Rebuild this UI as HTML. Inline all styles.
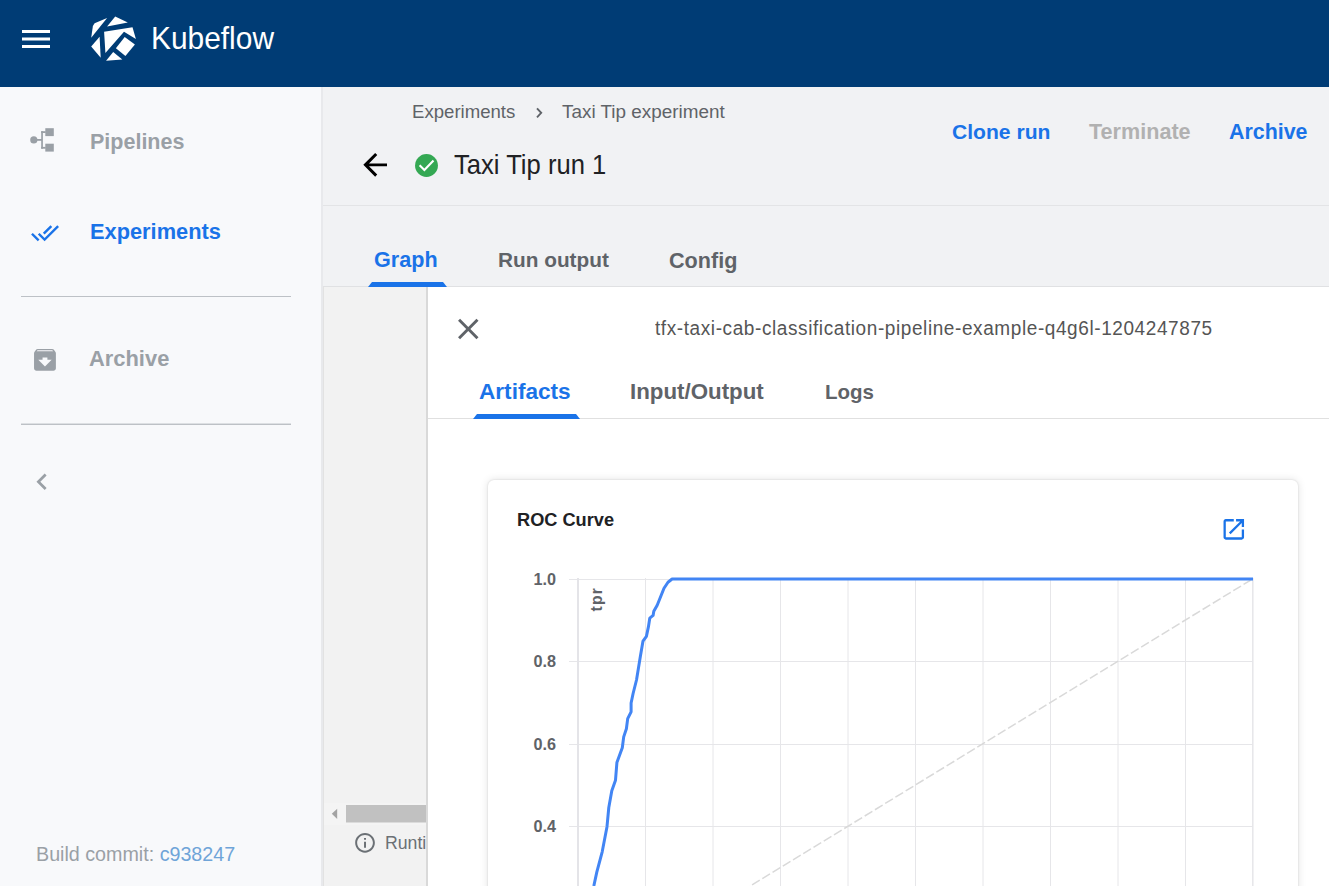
<!DOCTYPE html>
<html>
<head>
<meta charset="utf-8">
<style>
html,body{margin:0;padding:0;}
body{width:1329px;height:886px;overflow:hidden;position:relative;background:#fff;font-family:"Liberation Sans",sans-serif;}
.abs{position:absolute;}
.t{position:absolute;white-space:nowrap;}
.b{font-weight:bold;}
#header{left:0;top:0;width:1329px;height:87px;background:#003c75;}
#sidebar{left:0;top:87px;width:321px;height:799px;background:#f8f9fb;}
#sideborder{left:321px;top:87px;width:2px;height:799px;background:#e8e9ec;}
#content{left:323px;top:87px;width:1006px;height:799px;background:#f1f2f4;}
.divider{position:absolute;left:21px;width:270px;height:1px;background:#bdc1c6;}
</style>
</head>
<body>
<!-- HEADER -->
<div id="header" class="abs">
  <svg class="abs" style="left:0;top:0" width="300" height="87" viewBox="0 0 300 87">
    <rect x="22" y="30" width="28" height="3" fill="#fff"/>
    <rect x="22" y="37.5" width="28" height="3" fill="#fff"/>
    <rect x="22" y="45" width="28" height="3" fill="#fff"/>
    <g fill="#fff">
      <polygon points="94.6,23.2 107.1,18.1 91.2,37.8 92.9,25.9"/>
      <polygon points="115.2,16.4 127.8,22.5 107.1,26.6"/>
      <polygon points="99.6,36.7 91.2,46.6 100.7,57.7"/>
      <polygon points="104.1,31.7 132.5,27.3 135.9,39.1 124,31.7 105.4,53"/>
      <polygon points="124.7,37.1 134.9,44.5 125.4,56 115.9,48.3"/>
      <polygon points="113.2,52 122.3,59.4 106.1,60.8"/>
    </g>
  </svg>
  <div class="t" style="left:151px;top:24px;font-size:29.9px;line-height:29.9px;color:#fff;transform:scaleY(1.07);transform-origin:0 25px;">Kubeflow</div>
</div>

<!-- SIDEBAR -->
<div id="sidebar" class="abs">
</div>
<div id="sideborder" class="abs"></div>
<svg class="abs" style="left:0;top:87px" width="321" height="799" viewBox="0 87 321 799">
  <g fill="#9aa0a6">
    <circle cx="33.8" cy="139.9" r="3.6"/>
    <rect x="36" y="139" width="6" height="1.8"/>
    <rect x="41.2" y="131.2" width="1.7" height="17.5"/>
    <rect x="41.2" y="131.2" width="4.5" height="1.8"/>
    <rect x="41.2" y="146.9" width="4.5" height="1.8"/>
    <rect x="45.3" y="128.2" width="8.5" height="7.9"/>
    <rect x="45.3" y="143.7" width="8.5" height="7.9"/>
  </g>
  <path transform="translate(30.6,218.5) scale(1.2)" fill="#1a73e8" d="M18 7l-1.41-1.41-6.34 6.34 1.41 1.41L18 7zm4.24-1.41L11.66 16.17 7.48 12l-1.41 1.41L11.66 19l12-12-1.42-1.41zM.41 13.41L6 19l1.41-1.41L1.83 12 .41 13.41z"/>
  <path transform="translate(30.4,345.3) scale(1.214)" fill="#9aa0a6" d="M20.54 5.23l-1.39-1.68C18.88 3.21 18.47 3 18 3H6c-.47 0-.88.21-1.16.55L3.46 5.23C3.170 5.57 3 6.02 3 6.5V19c0 1.1.9 2 2 2h14c1.1 0 2-.9 2-2V6.5c0-.48-.17-.93-.46-1.27zM12 17.5L6.5 12H10v-2h4v2h3.5L12 17.5zM5.12 5l.81-1h12l.94 1H5.12z"/>
  <path transform="translate(25.5,465.3) scale(1.37)" fill="#9aa0a6" d="M15.41 7.41L14 6l-6 6 6 6 1.41-1.41L10.83 12z"/>
</svg>
<div class="divider" style="top:296px"></div>
<div class="divider" style="top:424px;box-shadow:0 -1px 0 rgba(189,193,198,0.45)"></div>
<div class="t b" style="left:90px;top:132px;font-size:21.5px;line-height:21.5px;color:#9aa0a6;">Pipelines</div>
<div class="t b" style="left:90px;top:221px;font-size:21.8px;line-height:21.8px;color:#1a73e8;">Experiments</div>
<div class="t b" style="left:89px;top:348px;font-size:21.9px;line-height:21.9px;color:#9aa0a6;">Archive</div>
<div class="t" style="left:36px;top:845px;font-size:19.7px;line-height:19.7px;color:#9aa0a6;">Build commit: <span style="color:#6fa4d8">c938247</span></div>

<!-- CONTENT -->
<div id="content" class="abs"></div>
<!-- page header -->
<div class="t" style="left:412px;top:102.5px;font-size:18.6px;line-height:18.6px;color:#5f6368;">Experiments</div>
<svg class="abs" style="left:530px;top:104px" width="16" height="16" viewBox="0 0 16 16"><path d="M7 4.3 L11.2 8.8 L7 13.3" fill="none" stroke="#5f6368" stroke-width="1.9"/></svg>
<div class="t" style="left:562px;top:102.5px;font-size:18.9px;line-height:18.9px;color:#5f6368;">Taxi Tip experiment</div>
<svg class="abs" style="left:350px;top:140px" width="100" height="50" viewBox="350 140 100 50">
  <path transform="translate(357.4,147.1) scale(1.48)" fill="#000" d="M20 11H7.83l5.59-5.59L12 4l-8 8 8 8 1.41-1.41L7.83 13H20v-2z"/>
  <circle cx="426.5" cy="165.5" r="11.45" fill="#34a853"/>
  <polyline points="419.6,165.2 424.4,170 433.5,160.6" fill="none" stroke="#fff" stroke-width="2.1"/>
</svg>
<div class="t" style="left:454px;top:153px;font-size:25.6px;line-height:25.6px;color:#202124;transform:scaleY(1.07);transform-origin:0 21px;">Taxi Tip run 1</div>
<div class="t b" style="left:952px;top:121px;font-size:21.1px;line-height:21.1px;color:#1a73e8;">Clone run</div>
<div class="t b" style="left:1089px;top:121px;font-size:21.6px;line-height:21.6px;color:#b1b1b1;">Terminate</div>
<div class="t b" style="left:1229px;top:122px;font-size:21.4px;line-height:21.4px;color:#1a73e8;">Archive</div>
<div class="abs" style="left:323px;top:205px;width:1006px;height:1px;background:#e3e4e6;"></div>
<!-- tabs -->
<div class="t b" style="left:374px;top:249px;font-size:21.6px;line-height:21.6px;color:#1a73e8;">Graph</div>
<div class="t b" style="left:498px;top:250px;font-size:20.8px;line-height:20.8px;color:#5f6368;">Run output</div>
<div class="t b" style="left:669px;top:250px;font-size:21.6px;line-height:21.6px;color:#5f6368;">Config</div>
<div class="abs" style="left:323px;top:286px;width:1006px;height:1px;background:#e0e1e3;"></div>
<div class="abs" style="left:368px;top:282px;width:79px;height:5px;background:#1a73e8;clip-path:polygon(4px 0,75px 0,79px 5px,0 5px);"></div>
<!-- graph area -->
<div class="abs" style="left:323px;top:287px;width:104px;height:599px;background:#f2f2f2;"></div>
<div class="abs" style="left:323px;top:287px;width:1px;height:599px;background:#e2e2e2;"></div>
<div class="abs" style="left:426px;top:287px;width:2px;height:599px;background:#d9d9d9;"></div>
<div class="abs" style="left:324px;top:803px;width:102px;height:22px;background:#f4f4f4;"></div>
<svg class="abs" style="left:323px;top:800px" width="104" height="86" viewBox="323 800 104 86">
  <polygon points="337.2,808.7 337.2,818.9 331.8,813.8" fill="#a3a3a3"/>
  <rect x="346" y="805" width="80" height="17.5" fill="#c1c1c1"/>
  <path transform="translate(353.2,831) scale(0.985)" fill="#6b7075" d="M11 7h2v2h-2zm0 4h2v6h-2zm1-9C6.480 2 2 6.48 2 12s4.48 10 10 10 10-4.48 10-10S17.52 2 12 2zm0 18c-4.41 0-8-3.59-8-8s3.59-8 8-8 8 3.59 8 8-3.59 8-8 8z"/>
</svg>
<div class="abs" style="left:324px;top:820px;width:102px;height:40px;overflow:hidden;">
  <div class="t" style="left:61px;top:15px;font-size:17.7px;line-height:17.7px;color:#6b7075;">Runtime execution graph</div>
</div>
<!-- drawer -->
<div class="abs" style="left:428px;top:287px;width:901px;height:599px;background:#fff;"></div>
<svg class="abs" style="left:440px;top:300px" width="50" height="50" viewBox="440 300 50 50">
  <path transform="translate(450.7,311.4) scale(1.464)" fill="#5f6368" d="M19 6.41L17.59 5 12 10.59 6.41 5 5 6.41 10.59 12 5 17.59 6.41 19 12 13.41 17.59 19 19 17.59 13.41 12z"/>
</svg>
<div class="t" style="left:655px;top:319px;font-size:19px;line-height:19px;letter-spacing:0.59px;color:#555;transform:scaleY(1.05);transform-origin:0 16px;">tfx-taxi-cab-classification-pipeline-example-q4g6l-1204247875</div>
<div class="t b" style="left:479px;top:381px;font-size:22.6px;line-height:22.6px;color:#1a73e8;">Artifacts</div>
<div class="t b" style="left:630px;top:381px;font-size:22.3px;line-height:22.3px;color:#5f6368;">Input/Output</div>
<div class="t b" style="left:825px;top:382px;font-size:20.5px;line-height:20.5px;color:#5f6368;">Logs</div>
<div class="abs" style="left:428px;top:418px;width:901px;height:1px;background:#e0e0e0;"></div>
<div class="abs" style="left:473px;top:414px;width:107px;height:5px;background:#1a73e8;clip-path:polygon(4px 0,103px 0,107px 5px,0 5px);"></div>
<!-- card -->
<div class="abs" style="left:488px;top:480px;width:810px;height:500px;background:#fff;border-radius:6px;box-shadow:0 0 8px rgba(0,0,0,0.12),0 0 2px rgba(0,0,0,0.14);"></div>
<div class="t b" style="left:517px;top:511px;font-size:18.2px;line-height:18.2px;color:#202124;">ROC Curve</div>
<svg class="abs" style="left:1215px;top:510px" width="40" height="40" viewBox="1215 510 40 40">
  <path transform="translate(1220.1,515.7) scale(1.14)" fill="#1a73e8" d="M19 19H5V5h7V3H5c-1.11 0-2 .9-2 2v14c0 1.1.89 2 2 2h14c1.1 0 2-.9 2-2v-7h-2v7zM14 3v2h3.59l-9.83 9.83 1.41 1.41L19 6.41V10h2V3h-7z"/>
</svg>
<svg class="abs" style="left:488px;top:540px" width="810" height="346" viewBox="488 540 810 346">
  <g stroke="#e6e6e9" stroke-width="1">
    <line x1="569" y1="579.5" x2="1253" y2="579.5"/>
    <line x1="569" y1="661.5" x2="1253" y2="661.5"/>
    <line x1="569" y1="744.5" x2="1253" y2="744.5"/>
    <line x1="569" y1="826.5" x2="1253" y2="826.5"/>
    <line x1="569" y1="908.5" x2="1253" y2="908.5"/>
    <line x1="645.5" y1="578" x2="645.5" y2="991"/>
    <line x1="713" y1="578" x2="713" y2="991"/>
    <line x1="780.5" y1="578" x2="780.5" y2="991"/>
    <line x1="848" y1="578" x2="848" y2="991"/>
    <line x1="915.5" y1="578" x2="915.5" y2="991"/>
    <line x1="983" y1="578" x2="983" y2="991"/>
    <line x1="1050.5" y1="578" x2="1050.5" y2="991"/>
    <line x1="1118" y1="578" x2="1118" y2="991"/>
    <line x1="1185.5" y1="578" x2="1185.5" y2="991"/>
  </g>
  <line x1="578" y1="578" x2="578" y2="991" stroke="#e4e4e8" stroke-width="2"/>
  <line x1="1252.8" y1="578" x2="1252.8" y2="991" stroke="#e6e6e9" stroke-width="1.5"/>
  <line x1="578" y1="991.2" x2="1253" y2="578.7" stroke="#d9d9d9" stroke-width="1.5" stroke-dasharray="9 3"/>
  <polyline fill="none" stroke="#4285f4" stroke-width="3" stroke-linejoin="round" points="593.8,886 596.8,872.1 602.2,851.8 607,826.7 608.8,807.5 611.8,790.8 615.5,780.2 616.9,762.6 622.3,747.7 623.7,736.9 626.4,728.8 627.7,718.6 631.1,711.8 631.1,703 633.1,693.5 636.5,680 640.3,656.7 643,641.1 646.4,636.4 648.4,626.9 649.8,618.1 653.1,615.4 653.8,611.3 657.2,605.2 661.3,595 664,588.3 668,582.2 672.1,579 1253,579"/>
  <g font-family="Liberation Sans" font-weight="bold" font-size="16.2" fill="#5f6368" text-anchor="end">
    <text x="556" y="584.5">1.0</text>
    <text x="556" y="667">0.8</text>
    <text x="556" y="749.5">0.6</text>
    <text x="556" y="832">0.4</text>
  </g>
  <text transform="translate(602,611.6) rotate(-90)" font-family="Liberation Sans" font-weight="bold" font-size="15.6" fill="#5f6368" textLength="23.4" lengthAdjust="spacing">tpr</text>
</svg>
</body>
</html>
